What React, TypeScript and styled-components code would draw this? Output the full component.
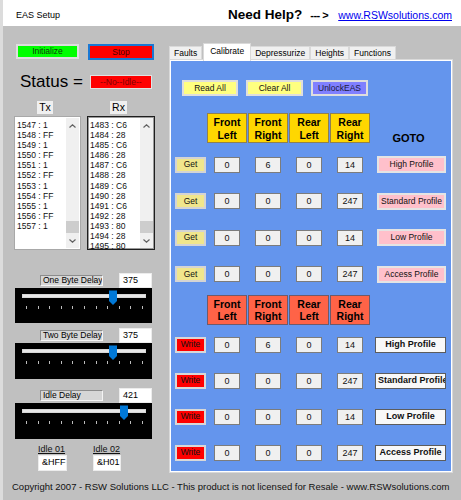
import React from 'react';
import styled, { createGlobalStyle } from 'styled-components';

const GlobalStyle = createGlobalStyle`
  html, body {
    margin: 0;
    padding: 0;
    background: #c0c0c0;
  }
  body {
    font-family: "Liberation Sans", Arial, sans-serif;
    color: #000;
  }
  * {
    box-sizing: border-box;
  }
`;

const TRACK_MAX = 511;

const Window = styled.div`
  width: 461px;
  height: 500px;
  background: #c0c0c0;
  border-left: 3px solid #dcdcdc;
  display: flex;
  flex-direction: column;
  overflow: hidden;
`;

const TitleBar = styled.header`
  flex: none;
  height: 26px;
  background: #fff;
  display: flex;
  align-items: center;
  padding: 3px 9px 0 13px;
`;

const Caption = styled.span`
  font-size: 9px;
`;

const HelpGroup = styled.div`
  margin-left: auto;
  display: flex;
  align-items: center;
`;

const HelpText = styled.span`
  font-size: 13.5px;
  font-weight: bold;
`;

const Arrow = styled.span`
  font-size: 11px;
  font-weight: bold;
  letter-spacing: -0.5px;
  margin: 0 10px 0 8px;
`;

const Link = styled.a`
  font-size: 10.5px;
  color: #0000ee;
  text-decoration: underline;
`;

const Main = styled.div`
  flex: 1;
  display: flex;
`;

const LeftColumn = styled.div`
  width: 166px;
  padding-left: 11px;
  display: flex;
  flex-direction: column;
`;

const ButtonRow = styled.div`
  margin: 18px 0 0 2px;
  display: flex;
  align-items: flex-start;
  gap: 9px;
`;

const FlatButton = styled.button<{ $bg: string; $fg?: string; $edge?: string; $w: number; $h?: number }>`
  display: block;
  width: ${(p) => p.$w}px;
  height: ${(p) => p.$h ?? 16}px;
  padding: 0 1px;
  margin: 0;
  background: ${(p) => p.$bg};
  color: ${(p) => p.$fg ?? '#111'};
  border: 2px solid ${(p) => p.$edge ?? '#dedede'};
  font-family: "Liberation Sans", Arial, sans-serif;
  font-size: 8.5px;
  line-height: 11px;
  text-align: center;
  white-space: nowrap;
  overflow: hidden;
`;

const StatusRow = styled.div`
  margin: 14px 0 0 6px;
  height: 16px;
  display: flex;
  align-items: center;
  gap: 7px;
`;

const StatusLabel = styled.span`
  font-size: 17px;
  line-height: 16px;
`;

const StatusBox = styled.div`
  width: 62px;
  height: 14px;
  background: #ff0000;
  border: 1px solid #e2e2e2;
  color: #800000;
  font-size: 8.5px;
  line-height: 12px;
  text-align: center;
`;

const ListGrid = styled.div<{ $top: number }>`
  margin-top: ${(p) => p.$top}px;
  display: grid;
  grid-template-columns: 67px 68px;
  column-gap: 6px;
`;

const ListCaption = styled.div`
  justify-self: center;
  margin-right: 5px;
  height: 13px;
  padding: 0 2px;
  background: #f0f0f0;
  font-size: 10.5px;
  line-height: 13px;
`;

const ListBox = styled.div<{ $focused?: boolean }>`
  height: 134px;
  background: #fff;
  border: 1px solid ${(p) => (p.$focused ? '#1e1e1e' : '#a8a8a8')};
  box-shadow: ${(p) => (p.$focused ? 'inset 0 0 0 1px #9a9a9a' : 'none')};
  display: flex;
  overflow: hidden;
`;

const ListItems = styled.div`
  flex: 1;
  padding: 3px 0 0 2px;
  font-size: 8.5px;
  line-height: 10.1px;
  color: #111;
  white-space: nowrap;
  overflow: hidden;
`;

const ScrollBar = styled.div`
  width: 13px;
  margin: 1px 1px 1px 0;
  background: #f0f0f0;
  display: flex;
  flex-direction: column;
  align-items: stretch;
`;

const ScrollArrow = styled.div`
  height: 15px;
  display: flex;
  align-items: center;
  justify-content: center;
`;

const ScrollThumb = styled.div`
  margin-top: auto;
  height: 12px;
  background: #cdcdcd;
`;

const DelayRow = styled.div<{ $top: number }>`
  margin: ${(p) => p.$top}px 0 0 26px;
  height: 15px;
  display: flex;
  align-items: center;
  gap: 16px;
`;

const DelayLabel = styled.div`
  width: 63px;
  height: 11px;
  padding-left: 2px;
  background: #d6d6d6;
  border-top: 1px solid #8c8c8c;
  border-left: 1px solid #8c8c8c;
  border-right: 1px solid #f4f4f4;
  border-bottom: 1px solid #f4f4f4;
  font-size: 8.5px;
  line-height: 9px;
  white-space: nowrap;
  overflow: hidden;
`;

const ValueField = styled.div<{ $w: number; $h?: number }>`
  width: ${(p) => p.$w}px;
  height: ${(p) => p.$h ?? 15}px;
  background: #fff;
  border: 1px solid #ececec;
  padding-left: 3px;
  font-size: 9px;
  line-height: 13px;
`;

const Slider = styled.div<{ $h: number }>`
  position: relative;
  margin-left: 1px;
  width: 137px;
  height: ${(p) => p.$h}px;
  background: #000;
  padding: 6px 6px 0 7px;
`;

const SliderTrack = styled.div`
  height: 4px;
  background: #e7e7e7;
  border: 1px solid #d6d6d6;
`;

const TickRow = styled.div`
  margin-top: 8px;
  padding: 0 3px 0 4px;
  display: flex;
  justify-content: space-between;
`;

const Tick = styled.span`
  width: 1px;
  height: 3px;
  background: #bcbcbc;
`;

const SliderThumb = styled.svg`
  position: absolute;
  top: 2px;
`;

const IdleRow = styled.div`
  margin: 5px 0 0 24px;
  display: flex;
  gap: 26px;
`;

const IdleField = styled.div`
  display: flex;
  flex-direction: column;
  gap: 1px;
`;

const IdleLabel = styled.span`
  height: 10px;
  font-size: 9px;
  line-height: 10px;
  text-decoration: underline;
  color: #111;
`;

const TabArea = styled.div`
  margin-top: 17px;
  width: 284px;
  display: flex;
  flex-direction: column;
`;

const TabStrip = styled.div`
  height: 16px;
  display: flex;
  align-items: flex-end;
`;

const Tab = styled.div<{ $active?: boolean }>`
  position: relative;
  z-index: ${(p) => (p.$active ? 1 : 0)};
  height: ${(p) => (p.$active ? 18 : 13)}px;
  margin: ${(p) => (p.$active ? '0 -1px -2px 1px' : '0')};
  padding: ${(p) => (p.$active ? '2px 6px 0' : '1px 4px 0')};
  background: ${(p) => (p.$active ? '#fff' : '#f0f0f0')};
  border: 1px solid #d9d9d9;
  border-bottom: none;
  font-size: 8.5px;
  line-height: 10px;
  white-space: nowrap;
`;

const TabPage = styled.div`
  height: 414px;
  border: 1px solid #d9d9d9;
  background: #fff;
  padding: 1px;
`;

const BluePage = styled.div`
  height: 100%;
  background: #6495ed;
  padding: 19px 0 0 4px;
`;

const ActionRow = styled.div`
  margin-left: 7px;
  display: flex;
  gap: 8px;
`;

const ProfileRow = styled.div<{ $top: number; $h?: number }>`
  margin-top: ${(p) => p.$top}px;
  height: ${(p) => p.$h ?? 16}px;
  display: grid;
  grid-template-columns: 31px repeat(4, 40px) 75px;
  column-gap: 1px;
  align-items: center;
`;

const CornerHeader = styled.div<{ $bg: string; $edge: string }>`
  height: 30px;
  background: ${(p) => p.$bg};
  border: 1px solid ${(p) => p.$edge};
  font-size: 10.5px;
  font-weight: bold;
  line-height: 12.5px;
  text-align: center;
  padding-top: 2px;
`;

const GotoLabel = styled.div`
  align-self: end;
  text-align: center;
  font-size: 11px;
  font-weight: bold;
  line-height: 12px;
  margin-bottom: -1px;
`;

const Cell = styled.div`
  justify-self: center;
  width: 26px;
  height: 16px;
  background: #f0f0f0;
  border: 1px solid #7c7c7c;
  font-size: 9px;
  line-height: 14px;
  text-align: center;
  color: #111;
`;

const ProfileSlot = styled.div`
  justify-self: end;
`;

const BoldProfileButton = styled(FlatButton)`
  font-weight: bold;
  font-size: 9px;
  border: 1px solid #5c5c5c;
  padding: 0 2px;
  line-height: 13px;
`;

const Footer = styled.footer`
  flex: none;
  height: 24px;
  padding: 5px 0 0 9px;
  font-size: 9.5px;
  line-height: 12px;
  color: #111;
  white-space: nowrap;
`;

type ProfileValues = { fl: number; fr: number; rl: number; rr: number; name: string };

const profiles: ProfileValues[] = [
  { fl: 0, fr: 6, rl: 0, rr: 14, name: 'High Profile' },
  { fl: 0, fr: 0, rl: 0, rr: 247, name: 'Standard Profile' },
  { fl: 0, fr: 0, rl: 0, rr: 14, name: 'Low Profile' },
  { fl: 0, fr: 0, rl: 0, rr: 247, name: 'Access Profile' },
];

const txLines = [
  '1547 : 1', '1548 : FF', '1549 : 1', '1550 : FF', '1551 : 1', '1552 : FF',
  '1553 : 1', '1554 : FF', '1555 : 1', '1556 : FF', '1557 : 1',
];

const rxLines = [
  '1483 : C6', '1484 : 28', '1485 : C6', '1486 : 28', '1487 : C6', '1488 : 28', '1489 : C6',
  '1490 : 28', '1491 : C6', '1492 : 28', '1493 : 80', '1494 : 28', '1495 : 80',
];

const headerCells = [['Front', 'Left'], ['Front', 'Right'], ['Rear', 'Left'], ['Rear', 'Right']];

const Chevron = ({ up }: { up?: boolean }) => (
  <svg width="7" height="4" viewBox="0 0 7 4">
    <polyline
      points={up ? '0.5,3.5 3.5,0.8 6.5,3.5' : '0.5,0.5 3.5,3.2 6.5,0.5'}
      fill="none"
      stroke="#606060"
      strokeWidth="1.2"
    />
  </svg>
);

const List = ({ lines, focused }: { lines: string[]; focused?: boolean }) => (
  <ListBox $focused={focused}>
    <ListItems>
      {lines.map((l) => (
        <div key={l}>{l}</div>
      ))}
    </ListItems>
    <ScrollBar>
      <ScrollArrow>
        <Chevron up />
      </ScrollArrow>
      <ScrollThumb />
      <ScrollArrow>
        <Chevron />
      </ScrollArrow>
    </ScrollBar>
  </ListBox>
);

const DelayControl = ({ label, value, top, height }: { label: string; value: number; top: number; height: number }) => {
  // thumb centre slides along the 124px track
  const centre = 7 + (value / TRACK_MAX) * 124;
  return (
    <>
      <DelayRow $top={top}>
        <DelayLabel>{label}</DelayLabel>
        <ValueField $w={33}>{value}</ValueField>
      </DelayRow>
      <Slider $h={height}>
        <SliderTrack />
        <TickRow>
          {Array.from({ length: 11 }, (_, i) => (
            <Tick key={i} />
          ))}
        </TickRow>
        <SliderThumb width="8" height="15" viewBox="0 0 8 15" style={{ left: centre - 4 }}>
          <path d="M0 0.5 H8 V11 L4 15 L0 11 Z" fill="#0078d7" />
        </SliderThumb>
      </Slider>
    </>
  );
};

const HeaderRow = ({ bg, edge, top, goto }: { bg: string; edge: string; top: number; goto?: boolean }) => (
  <ProfileRow $top={top} $h={30}>
    <span />
    {headerCells.map(([a, b]) => (
      <CornerHeader key={a + b} $bg={bg} $edge={edge}>
        {a}
        <br />
        {b}
      </CornerHeader>
    ))}
    {goto ? <GotoLabel>GOTO</GotoLabel> : <span />}
  </ProfileRow>
);

export default function App() {
  return (
    <>
      <GlobalStyle />
      <Window>
        <TitleBar>
          <Caption>EAS Setup</Caption>
          <HelpGroup>
            <HelpText>Need Help?</HelpText>
            <Arrow>--- &gt;</Arrow>
            <Link href="#">www.RSWsolutions.com</Link>
          </HelpGroup>
        </TitleBar>

        <Main>
          <LeftColumn>
            <ButtonRow>
              <FlatButton $bg="#00ff00" $fg="#0c3a0c" $w={63} $h={15}>
                Initialize
              </FlatButton>
              <FlatButton $bg="#ff0000" $fg="#4a0000" $edge="#1a78d4" $w={66}>
                Stop
              </FlatButton>
            </ButtonRow>

            <StatusRow>
              <StatusLabel>Status =</StatusLabel>
              <StatusBox>--No--Idle--</StatusBox>
            </StatusRow>

            <ListGrid $top={11}>
              <ListCaption>Tx</ListCaption>
              <ListCaption>Rx</ListCaption>
            </ListGrid>
            <ListGrid $top={2}>
              <List lines={txLines} />
              <List lines={rxLines} focused />
            </ListGrid>

            <DelayControl label="One Byte Delay" value={375} top={23} height={35} />
            <DelayControl label="Two Byte Delay" value={375} top={5} height={36} />
            <DelayControl label="Idle Delay" value={421} top={9} height={36} />

            <IdleRow>
              <IdleField>
                <IdleLabel>Idle 01</IdleLabel>
                <ValueField $w={29} $h={16}>&amp;HFF</ValueField>
              </IdleField>
              <IdleField>
                <IdleLabel>Idle 02</IdleLabel>
                <ValueField $w={28} $h={16}>&amp;H01</ValueField>
              </IdleField>
            </IdleRow>
          </LeftColumn>

          <TabArea>
            <TabStrip>
              <Tab>Faults</Tab>
              <Tab $active>Calibrate</Tab>
              <Tab>Depressurize</Tab>
              <Tab>Heights</Tab>
              <Tab>Functions</Tab>
            </TabStrip>
            <TabPage>
              <BluePage>
                <ActionRow>
                  <FlatButton $bg="#ffff80" $w={56}>Read All</FlatButton>
                  <FlatButton $bg="#ffff80" $w={57}>Clear All</FlatButton>
                  <FlatButton $bg="#8080ff" $fg="#1a1a40" $w={57}>UnlockEAS</FlatButton>
                </ActionRow>

                <HeaderRow bg="#ffd700" edge="#8f8050" top={17} goto />
                {profiles.map((p, i) => (
                  <ProfileRow key={'get' + p.name} $top={i === 0 ? 13 : 20.5}>
                    <FlatButton $bg="#f0e68c" $edge="#d4d4d4" $w={31}>Get</FlatButton>
                    <Cell>{p.fl}</Cell>
                    <Cell>{p.fr}</Cell>
                    <Cell>{p.rl}</Cell>
                    <Cell>{p.rr}</Cell>
                    <ProfileSlot>
                      <FlatButton $bg="#ffc0cb" $edge="#e4e4e4" $w={69} $h={17}>{p.name}</FlatButton>
                    </ProfileSlot>
                  </ProfileRow>
                ))}

                <HeaderRow bg="#ff6347" edge="#6f5a6a" top={13} />
                {profiles.map((p, i) => (
                  <ProfileRow key={'write' + p.name} $top={i === 0 ? 12 : 20}>
                    <FlatButton $bg="#ff0000" $edge="#d8d8d8" $w={31}>Write</FlatButton>
                    <Cell>{p.fl}</Cell>
                    <Cell>{p.fr}</Cell>
                    <Cell>{p.rl}</Cell>
                    <Cell>{p.rr}</Cell>
                    <ProfileSlot>
                      <BoldProfileButton $bg="#f8f8f8" $w={71}>{p.name}</BoldProfileButton>
                    </ProfileSlot>
                  </ProfileRow>
                ))}
              </BluePage>
            </TabPage>
          </TabArea>
        </Main>

        <Footer>
          Copyright 2007 - RSW Solutions LLC - This product is not licensed for Resale - www.RSWsolutions.com
        </Footer>
      </Window>
    </>
  );
}
